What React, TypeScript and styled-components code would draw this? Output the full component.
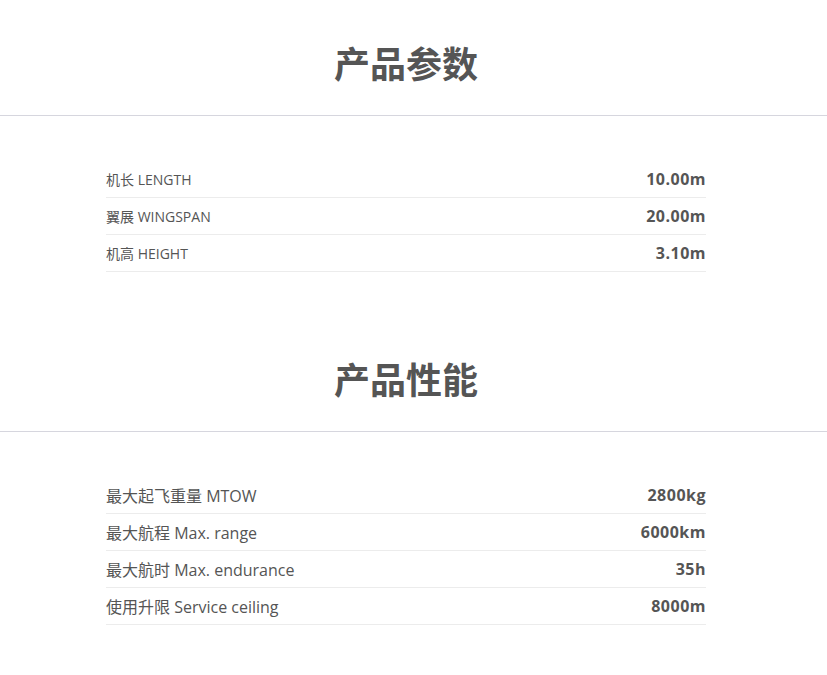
import styled, { createGlobalStyle } from "styled-components";

const GlobalStyle = createGlobalStyle`
  body {
    margin: 0;
    background: #fff;
    font-family: "Open Sans", "Noto Sans CJK SC", sans-serif;
    color: #555;
  }
`;

const Page = styled.div`
  padding-right: 15px;
  padding-bottom: 40px;
`;

const Section = styled.section`
  & + & {
    margin-top: 44px;
  }
`;

const Header = styled.div`
  padding: 40px 15px 25px 0;
  margin-right: -15px;
  border-bottom: 1px solid #d6d6de;
  text-align: center;

  h2 {
    margin: 0;
    font-size: 36px;
    line-height: 50px;
    font-weight: 700;
    color: #555;
  }
`;

const List = styled.ul`
  list-style: none;
  max-width: 600px;
  margin: 45px auto 0;
  padding: 0;
`;

const Row = styled.li<{ $size: number }>`
  display: flex;
  justify-content: space-between;
  align-items: center;
  height: 36px;
  border-bottom: 1px solid #ececec;

  span {
    font-size: ${(p) => p.$size}px;
    color: #555;
  }

  strong {
    font-size: 16px;
    font-weight: 700;
    letter-spacing: 0.5px;
    color: #555;
  }
`;

type Spec = { label: string; value: string };

const dims: Spec[] = [
  { label: "机长 LENGTH", value: "10.00m" },
  { label: "翼展 WINGSPAN", value: "20.00m" },
  { label: "机高 HEIGHT", value: "3.10m" },
];

const perf: Spec[] = [
  { label: "最大起飞重量 MTOW", value: "2800kg" },
  { label: "最大航程 Max. range", value: "6000km" },
  { label: "最大航时 Max. endurance", value: "35h" },
  { label: "使用升限 Service ceiling", value: "8000m" },
];

const SpecSection = ({ title, items, size }: { title: string; items: Spec[]; size: number }) => (
  <Section>
    <Header>
      <h2>{title}</h2>
    </Header>
    <List>
      {items.map((it) => (
        <Row key={it.label} $size={size}>
          <span>{it.label}</span>
          <strong>{it.value}</strong>
        </Row>
      ))}
    </List>
  </Section>
);

export default function App() {
  return (
    <Page>
      <GlobalStyle />
      <SpecSection title="产品参数" items={dims} size={14} />
      <SpecSection title="产品性能" items={perf} size={16} />
    </Page>
  );
}
